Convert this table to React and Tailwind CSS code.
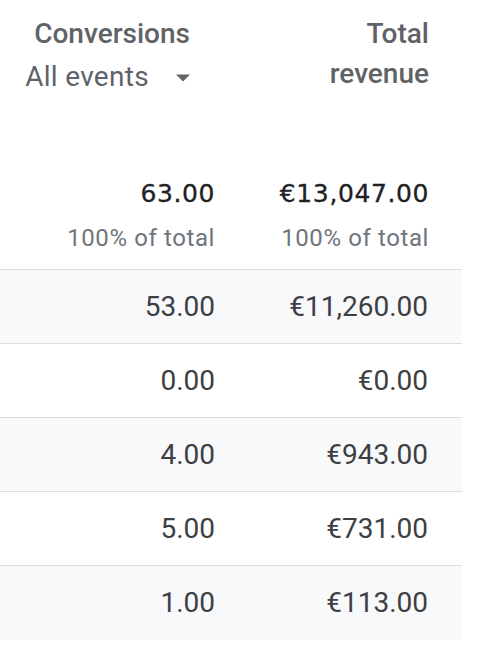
import React from "react";

const rows = [
  { conv: "53.00", rev: "€11,260.00", shaded: true },
  { conv: "0.00", rev: "€0.00", shaded: false },
  { conv: "4.00", rev: "€943.00", shaded: true },
  { conv: "5.00", rev: "€731.00", shaded: false },
  { conv: "1.00", rev: "€113.00", shaded: true },
];

export default function App() {
  return (
    <div className="w-[490px] h-[660px] bg-white font-['Roboto',sans-serif] overflow-hidden">
      <div className="w-[462px]">
        {/* Header */}
        <div className="flex h-[178px] pt-[14px]">
          <div className="w-[240px] flex flex-col items-end pr-[50px] text-[#5f6368]">
            <div className="text-[28px] leading-[40px] font-medium">Conversions</div>
            <div className="flex items-center mt-[3px] text-[28px] leading-[40px] tracking-[0.3px]">
              <span>All events</span>
              <svg width="14" height="8" viewBox="0 0 14 8" className="ml-[27px] mt-[2px]">
                <path d="M0 0.5 L14 0.5 L7 7.5 Z" fill="#5f6368" />
              </svg>
            </div>
          </div>
          <div className="flex-1 flex flex-col items-end pr-[33px] text-right text-[#5f6368] text-[28px] leading-[40px] font-medium">
            <div>Total</div>
            <div>revenue</div>
          </div>
        </div>

        {/* Totals */}
        <div className="flex h-[92px] border-b border-[#dadce0]">
          <div className="w-[240px] flex flex-col items-end pr-[25px]">
            <div className="font-['DejaVu_Sans',sans-serif] text-[25px] leading-[32px] tracking-[0.6px] text-[#202124] [-webkit-text-stroke:0.3px_#202124]">63.00</div>
            <div className="mt-[12px] text-[24px] leading-[32px] tracking-[0.6px] text-[#70757a]">100% of total</div>
          </div>
          <div className="flex-1 flex flex-col items-end pr-[33px]">
            <div className="font-['DejaVu_Sans',sans-serif] text-[25px] leading-[32px] tracking-[0.6px] text-[#202124] [-webkit-text-stroke:0.3px_#202124]">€13,047.00</div>
            <div className="mt-[12px] text-[24px] leading-[32px] tracking-[0.6px] text-[#70757a]">100% of total</div>
          </div>
        </div>

        {/* Rows */}
        {rows.map((r, i) => (
          <div
            key={i}
            className={
              "flex h-[74px] items-center text-[28px] text-[#3c4043] " +
              (r.shaded ? "bg-[#f8f9fa] " : "bg-white ") +
              (i < rows.length - 1 ? "border-b border-[#dadce0]" : "")
            }
          >
            <div className="w-[240px] text-right pr-[25px]">{r.conv}</div>
            <div className="flex-1 text-right pr-[34px]">{r.rev}</div>
          </div>
        ))}
      </div>
    </div>
  );
}
